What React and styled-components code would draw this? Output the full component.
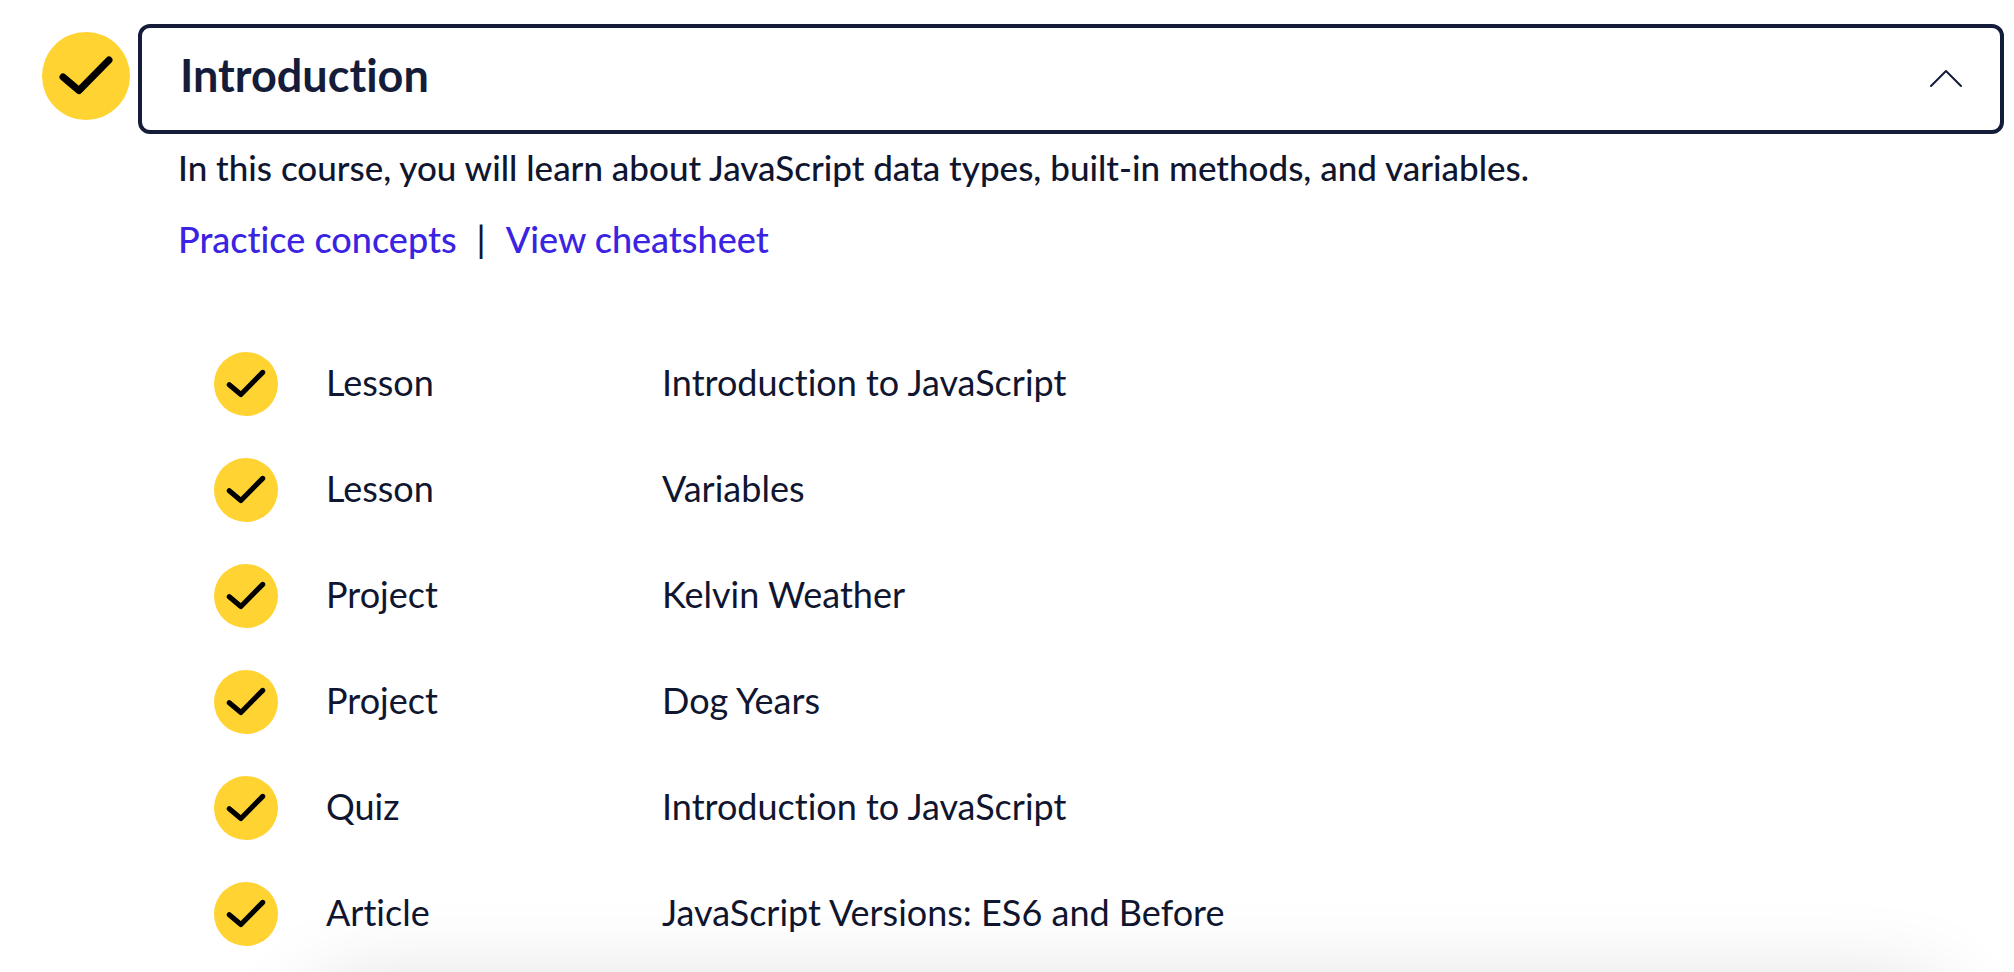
import React, { useState } from "react";
import styled, { createGlobalStyle } from "styled-components";

const GlobalStyle = createGlobalStyle`
  *, *::before, *::after { box-sizing: border-box; }
  body {
    margin: 0;
    background: #fff;
    color: #10162f;
    font-family: Lato, "Open Sans", sans-serif;
    font-size: 36px;
    font-variant-ligatures: none;
    line-height: 48px;
  }
`;

const Page = styled.main`
  height: 100vh;
  overflow: hidden;
  padding: 24px 10px 0 42px;
`;

const ModuleHeader = styled.header`
  display: flex;
  align-items: flex-start;
  gap: 8px;
`;

const Badge = styled.span`
  display: flex;
  flex: none;
  width: ${(p) => (p.$large ? 88 : 64)}px;
  height: ${(p) => (p.$large ? 88 : 64)}px;
  margin-top: ${(p) => (p.$large ? 8 : 0)}px;
  border-radius: 50%;
  background: #ffd332;

  svg {
    width: 100%;
    height: 100%;
  }
`;

const Heading = styled.h2`
  flex: 1;
  margin: 0;
`;

const Toggle = styled.button`
  display: flex;
  align-items: center;
  justify-content: space-between;
  width: 100%;
  height: 110px;
  padding: 0 36px 0 38px;
  border: 4px solid #141c3a;
  border-radius: 12px;
  outline: none;
  background: #fff;
  color: #141c3a;
  font: inherit;
  font-size: 45px;
  font-weight: 700;
  font-variant-ligatures: none;
  text-align: left;
  cursor: pointer;
`;

const Label = styled.span`
  padding-bottom: 8px;
`;

const Chevron = styled.svg`
  width: 36px;
  height: 20px;
  margin-bottom: 2px;
  transform: ${(p) => (p.$open ? "none" : "rotate(180deg)")};
`;

const Details = styled.div`
  padding: 9px 32px 0 136px;
`;

const Description = styled.p`
  margin: 0;
  font-size: 35px;
  font-weight: 500;
`;

const Links = styled.nav`
  display: flex;
  gap: 20px;
  margin-top: 24px;
  font-weight: 500;
`;

const TextLink = styled.a`
  color: #3a24e2;
  text-decoration: none;
`;

const Contents = styled.ul`
  display: grid;
  gap: 42px;
  margin: 89px 0 0;
  padding: 0 0 0 36px;
  list-style: none;
`;

const Item = styled.li`
  display: grid;
  grid-template-columns: 64px 288px 1fr;
  column-gap: 48px;
  align-items: center;
`;

const ItemText = styled.span`
  padding-bottom: 4px;
`;

const BottomPanel = styled.div`
  position: fixed;
  top: calc(100% + 18px);
  left: 320px;
  right: 76px;
  height: 120px;
  box-shadow: 0 0 90px rgba(0, 0, 0, 0.16);
`;

const items = [
  ["Lesson", "Introduction to JavaScript"],
  ["Lesson", "Variables"],
  ["Project", "Kelvin Weather"],
  ["Project", "Dog Years"],
  ["Quiz", "Introduction to JavaScript"],
  ["Article", "JavaScript Versions: ES6 and Before"],
];

function CompletedBadge({ large }) {
  return (
    <Badge $large={large} role="img" aria-label="Completed">
      <svg viewBox="0 0 88 88" fill="none" aria-hidden="true">
        <path
          d="M21 45 L37 58.5 L67 28"
          stroke="#000"
          strokeWidth="7"
          strokeLinecap="round"
          strokeLinejoin="round"
        />
      </svg>
    </Badge>
  );
}

export default function App() {
  const [open, setOpen] = useState(true);
  return (
    <Page>
      <GlobalStyle />
      <ModuleHeader>
        <CompletedBadge large />
        <Heading>
          <Toggle
            type="button"
            aria-expanded={open}
            aria-controls="module-details"
            onClick={() => setOpen(!open)}
          >
            <Label>Introduction</Label>
            <Chevron $open={open} viewBox="0 0 36 20" fill="none" aria-hidden="true">
              <path
                d="M3 18 L18 3 L33 18"
                stroke="currentColor"
                strokeWidth="2"
                strokeLinecap="round"
                strokeLinejoin="round"
              />
            </Chevron>
          </Toggle>
        </Heading>
      </ModuleHeader>
      <Details id="module-details" hidden={!open}>
        <Description>
          In this course, you will learn about JavaScript data types, built-in
          methods, and variables.
        </Description>
        <Links aria-label="Module resources">
          <TextLink href="#practice">Practice concepts</TextLink>
          <span aria-hidden="true">|</span>
          <TextLink href="#cheatsheet">View cheatsheet</TextLink>
        </Links>
        <Contents>
          {items.map(([kind, title], i) => (
            <Item key={i}>
              <CompletedBadge />
              <ItemText>{kind}</ItemText>
              <ItemText>{title}</ItemText>
            </Item>
          ))}
        </Contents>
      </Details>
      <BottomPanel />
    </Page>
  );
}
